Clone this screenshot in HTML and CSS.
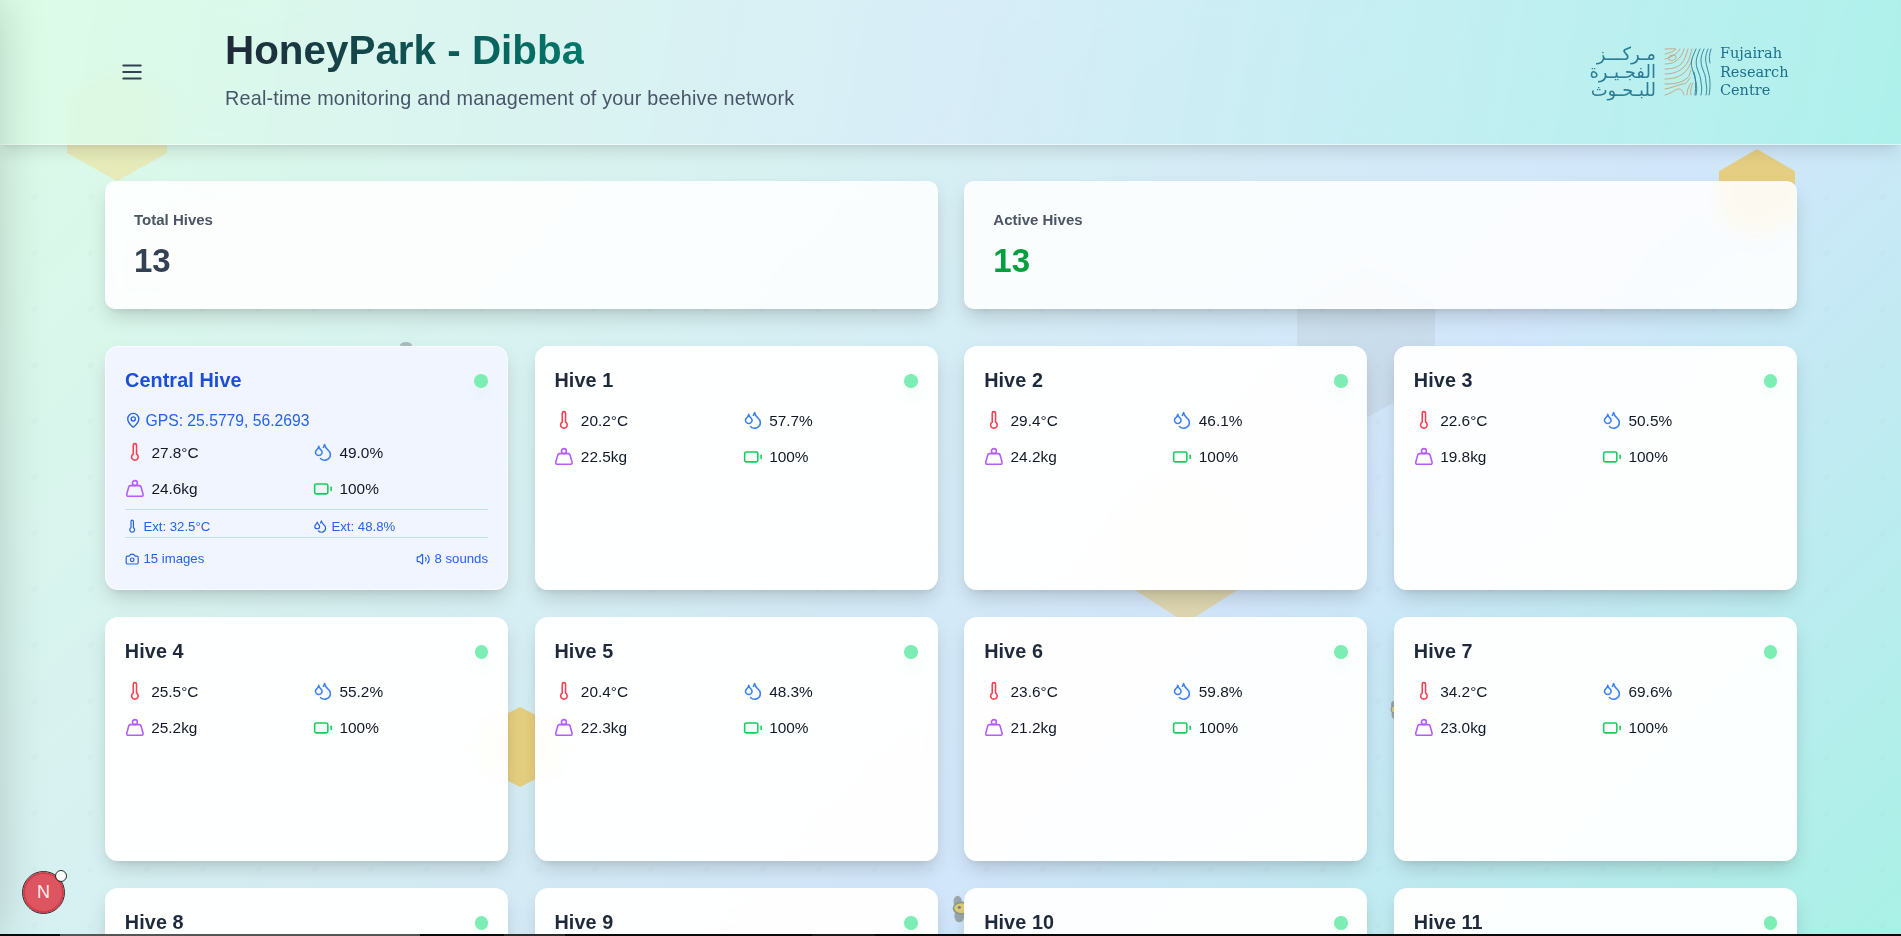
FILE: index.html
```html
<!DOCTYPE html>
<html lang="en">
<head>
<meta charset="utf-8">
<title>HoneyPark - Dibba</title>
<link rel="stylesheet" href="styles.css">
</head>
<body>
<svg class="sprites" width="0" height="0" aria-hidden="true">
  <symbol id="i-temp" viewBox="0 0 24 24"><path d="M14 4v10.54a4 4 0 1 1-4 0V4a2 2 0 0 1 4 0Z"/></symbol>
  <symbol id="i-drop" viewBox="0 0 24 24"><path d="M7 16.3c2.2 0 4-1.83 4-3.95 0-1.11-.59-2.2-1.76-3.13S7.4 6.77 7 5.28c-.44 1.49-1.11 2.96-2.24 3.94S3 11.24 3 12.35c0 2.12 1.8 3.95 4 3.95z"/><path d="M12.56 6.6A10.97 10.97 0 0 0 14 3.02c.5 2.5 2 4.9 4 6.5s3 3.5 3 5.5a6.98 6.98 0 0 1-11.91 4.97"/></symbol>
  <symbol id="i-weight" viewBox="0 0 24 24"><circle cx="12" cy="5" r="3"/><path d="M6.5 8a2 2 0 0 0-1.905 1.46L2.1 18.5A2 2 0 0 0 4 21h16a2 2 0 0 0 1.925-2.54L19.4 9.5A2 2 0 0 0 17.48 8Z"/></symbol>
  <symbol id="i-batt" viewBox="0 0 24 24"><path d="M22 14v-4"/><rect x="2" y="6" width="16" height="12" rx="2"/></symbol>
  <symbol id="i-pin" viewBox="0 0 24 24"><path d="M20 10c0 4.993-5.539 10.193-7.399 11.799a1 1 0 0 1-1.202 0C9.539 20.193 4 14.993 4 10a8 8 0 0 1 16 0"/><circle cx="12" cy="10" r="3"/></symbol>
  <symbol id="i-cam" viewBox="0 0 24 24"><path d="M14.5 4h-5L7 7H4a2 2 0 0 0-2 2v9a2 2 0 0 0 2 2h16a2 2 0 0 0 2-2V9a2 2 0 0 0-2-2h-3l-2.5-3z"/><circle cx="12" cy="13" r="3"/></symbol>
  <symbol id="i-vol" viewBox="0 0 24 24"><path d="M11 4.702a.705.705 0 0 0-1.203-.498L6.413 7.587A1.4 1.4 0 0 1 5.416 8H3a1 1 0 0 0-1 1v6a1 1 0 0 0 1 1h2.416a1.4 1.4 0 0 1 .997.413l3.383 3.384A.705.705 0 0 0 11 19.298z"/><path d="M16 9a5 5 0 0 1 0 6"/><path d="M19.364 18.364a9 9 0 0 0 0-12.728"/></symbol>
  <symbol id="i-bee" viewBox="0 0 24 36"><ellipse cx="8" cy="9" rx="5" ry="7" fill="#9aa9ae" stroke="none"/><ellipse cx="10" cy="26" rx="6" ry="8" fill="#9aa9ae" stroke="none"/><ellipse cx="13" cy="17" rx="10" ry="7" fill="#e2cf7a" stroke="#8f9a8e" stroke-width="2"/><circle cx="10" cy="16" r="2" fill="#7f8a78" stroke="none"/></symbol>
</svg>

<div class="app">
  <div class="decor" aria-hidden="true">
    <span class="hex hex-a"></span>
    <span class="hex hex-b"></span>
    <span class="hex hex-c"></span>
    <span class="hex hex-d"></span>
    <span class="hex hex-e"></span>
    <svg class="bee bee-a"><use href="#i-bee"/></svg>
    <svg class="bee bee-b"><use href="#i-bee"/></svg>
    <span class="bee-c"></span>
  </div>

  <header class="topbar">
    <button class="menu" aria-label="Menu">
      <svg viewBox="0 0 24 24"><path d="M4 6h16M4 12h16M4 18h16"/></svg>
    </button>
    <div class="brand">
      <h1>HoneyPark - Dibba</h1>
      <p>Real-time monitoring and management of your beehive network</p>
    </div>
    <div class="logo">
      <div class="logo-ar" dir="rtl" lang="ar"><span>مـركـــز</span><span>الفجـيـرة</span><span>للبـحـوث</span></div>
      <svg class="logo-mark" viewBox="0 0 48 48">
        <g class="tan">
          <path d="M1 1c4 0 8-.5 11 0-3 3-7 4-11 5"/>
          <path d="M16 1c-3 5-8 8-15 10"/>
          <path d="M20 1c-1 5-4 9-8 12-3 2-7 3-11 3"/>
          <path d="M24 1c-2 6-3 11-7 15-4 4-10 5-16 5"/>
          <path d="M28 1c-2 7-3 13-8 18-5 5-12 7-19 7"/>
          <path d="M6 8c3-2 6-1 6 1 0 3-4 4-7 3-1-1 0-3 1-4z"/>
          <path d="M1 31c8 0 15-2 20-7 3-3 6-8 7-13"/>
          <path d="M1 36c9 0 16-1 21-5 3-2 4-5 5-9"/>
          <path d="M1 41c7-1 12-4 18-5 3 0 5-3 7-6"/>
          <path d="M1 47c6-1 10-6 14-6 3 0 4 3 5 6"/>
          <path d="M23 47c0-4 1-8 4-12"/>
          <path d="M27 47c-1-4 0-8 2-12"/>
        </g>
        <g class="teal">
          <path d="M32 1c-3 7-6 12-4 19 2 6 3 10 4 14 1 5 1 9 0 13"/>
          <path d="M36 1c-3 7-5 12-3 19 2 6 4 9 4 15 1 4 1 8 0 12"/>
          <path d="M40 1c-3 7-4 11-2 18 2 6 4 9 4 16 1 4 1 8 0 12"/>
          <path d="M44 1c-3 7-3 11-1 18 1 5 3 9 3 16 0 4 0 8-1 12"/>
          <path d="M47 1c-2 6-2 10-1 14"/>
          <path d="M30 24c2 6 2 14 1 23"/>
        </g>
      </svg>
      <div class="logo-en">Fujairah<br>Research<br>Centre</div>
    </div>
  </header>

  <main class="content">
    <section class="stats">
      <div class="stat"><div class="stat-label">Total Hives</div><div class="stat-value">13</div></div>
      <div class="stat"><div class="stat-label">Active Hives</div><div class="stat-value is-active">13</div></div>
    </section>

    <section class="hives">
      <article class="hive hive-central">
        <div class="hive-head"><h2>Central Hive</h2><span class="dot"></span></div>
        <div class="gps"><svg class="ic-gps"><use href="#i-pin"/></svg>GPS: 25.5779, 56.2693</div>
        <div class="readings">
          <div class="reading"><svg class="ic c-temp"><use href="#i-temp"/></svg>27.8°C</div>
          <div class="reading"><svg class="ic c-drop"><use href="#i-drop"/></svg>49.0%</div>
          <div class="reading"><svg class="ic c-weight"><use href="#i-weight"/></svg>24.6kg</div>
          <div class="reading"><svg class="ic c-batt"><use href="#i-batt"/></svg>100%</div>
        </div>
        <div class="ext">
          <div class="ext-item"><svg class="ic-sm"><use href="#i-temp"/></svg>Ext: 32.5°C</div>
          <div class="ext-item"><svg class="ic-sm"><use href="#i-drop"/></svg>Ext: 48.8%</div>
        </div>
        <div class="media">
          <div class="ext-item"><svg class="ic-sm"><use href="#i-cam"/></svg>15 images</div>
          <div class="ext-item"><svg class="ic-sm"><use href="#i-vol"/></svg>8 sounds</div>
        </div>
      </article>

      <article class="hive">
        <div class="hive-head"><h2>Hive 1</h2><span class="dot"></span></div>
        <div class="readings">
          <div class="reading"><svg class="ic c-temp"><use href="#i-temp"/></svg>20.2°C</div>
          <div class="reading"><svg class="ic c-drop"><use href="#i-drop"/></svg>57.7%</div>
          <div class="reading"><svg class="ic c-weight"><use href="#i-weight"/></svg>22.5kg</div>
          <div class="reading"><svg class="ic c-batt"><use href="#i-batt"/></svg>100%</div>
        </div>
      </article>
      <article class="hive">
        <div class="hive-head"><h2>Hive 2</h2><span class="dot"></span></div>
        <div class="readings">
          <div class="reading"><svg class="ic c-temp"><use href="#i-temp"/></svg>29.4°C</div>
          <div class="reading"><svg class="ic c-drop"><use href="#i-drop"/></svg>46.1%</div>
          <div class="reading"><svg class="ic c-weight"><use href="#i-weight"/></svg>24.2kg</div>
          <div class="reading"><svg class="ic c-batt"><use href="#i-batt"/></svg>100%</div>
        </div>
      </article>
      <article class="hive">
        <div class="hive-head"><h2>Hive 3</h2><span class="dot"></span></div>
        <div class="readings">
          <div class="reading"><svg class="ic c-temp"><use href="#i-temp"/></svg>22.6°C</div>
          <div class="reading"><svg class="ic c-drop"><use href="#i-drop"/></svg>50.5%</div>
          <div class="reading"><svg class="ic c-weight"><use href="#i-weight"/></svg>19.8kg</div>
          <div class="reading"><svg class="ic c-batt"><use href="#i-batt"/></svg>100%</div>
        </div>
      </article>
      <article class="hive">
        <div class="hive-head"><h2>Hive 4</h2><span class="dot"></span></div>
        <div class="readings">
          <div class="reading"><svg class="ic c-temp"><use href="#i-temp"/></svg>25.5°C</div>
          <div class="reading"><svg class="ic c-drop"><use href="#i-drop"/></svg>55.2%</div>
          <div class="reading"><svg class="ic c-weight"><use href="#i-weight"/></svg>25.2kg</div>
          <div class="reading"><svg class="ic c-batt"><use href="#i-batt"/></svg>100%</div>
        </div>
      </article>
      <article class="hive">
        <div class="hive-head"><h2>Hive 5</h2><span class="dot"></span></div>
        <div class="readings">
          <div class="reading"><svg class="ic c-temp"><use href="#i-temp"/></svg>20.4°C</div>
          <div class="reading"><svg class="ic c-drop"><use href="#i-drop"/></svg>48.3%</div>
          <div class="reading"><svg class="ic c-weight"><use href="#i-weight"/></svg>22.3kg</div>
          <div class="reading"><svg class="ic c-batt"><use href="#i-batt"/></svg>100%</div>
        </div>
      </article>
      <article class="hive">
        <div class="hive-head"><h2>Hive 6</h2><span class="dot"></span></div>
        <div class="readings">
          <div class="reading"><svg class="ic c-temp"><use href="#i-temp"/></svg>23.6°C</div>
          <div class="reading"><svg class="ic c-drop"><use href="#i-drop"/></svg>59.8%</div>
          <div class="reading"><svg class="ic c-weight"><use href="#i-weight"/></svg>21.2kg</div>
          <div class="reading"><svg class="ic c-batt"><use href="#i-batt"/></svg>100%</div>
        </div>
      </article>
      <article class="hive">
        <div class="hive-head"><h2>Hive 7</h2><span class="dot"></span></div>
        <div class="readings">
          <div class="reading"><svg class="ic c-temp"><use href="#i-temp"/></svg>34.2°C</div>
          <div class="reading"><svg class="ic c-drop"><use href="#i-drop"/></svg>69.6%</div>
          <div class="reading"><svg class="ic c-weight"><use href="#i-weight"/></svg>23.0kg</div>
          <div class="reading"><svg class="ic c-batt"><use href="#i-batt"/></svg>100%</div>
        </div>
      </article>
      <article class="hive"><div class="hive-head"><h2>Hive 8</h2><span class="dot"></span></div></article>
      <article class="hive"><div class="hive-head"><h2>Hive 9</h2><span class="dot"></span></div></article>
      <article class="hive"><div class="hive-head"><h2>Hive 10</h2><span class="dot"></span></div></article>
      <article class="hive"><div class="hive-head"><h2>Hive 11</h2><span class="dot"></span></div></article>
    </section>
  </main>

  <div class="drawer" aria-hidden="true"></div>
  <div class="devbadge"><span>N</span><i></i></div>
  <div class="edge" aria-hidden="true"><b class="e1"></b><b class="e2"></b><b class="e3"></b><b class="e4"></b><b class="e5"></b><b class="e6"></b><b class="e7"></b></div>
</div>
</body>
</html>
```

FILE: styles.css
```css
* { box-sizing: border-box; }
html, body { margin: 0; height: 100%; overflow: hidden; }
body {
  font-family: "Liberation Sans", Arial, sans-serif;
  color: #111827;
  background: linear-gradient(135deg, #dcfce7 0%, #d2e6fb 65%, #a9f1e6 100%);
}
.sprites { position: absolute; }
.app { position: relative; height: 100vh; overflow: hidden; }
.app::before {
  content: "";
  position: absolute;
  inset: 0;
  background-image: radial-gradient(circle at 34.5px 29.5px, rgba(120, 150, 170, .06) 0, rgba(120, 150, 170, .04) 2px, rgba(120, 150, 170, 0) 4px);
  background-size: 56px 56px;
}

/* decorative layer */
.decor { position: absolute; inset: 0; }
.hex {
  position: absolute;
  clip-path: polygon(50% 0, 100% 25%, 100% 75%, 50% 100%, 0 75%, 0 25%);
}
.hex-a { left: 67px; top: 69px; width: 100px; height: 112px; background: #e9e6a8; opacity: .75; }
.hex-b { left: 1719px; top: 149px; width: 76px; height: 89px; background: #e5ce82; }
.hex-c { left: 1297px; top: 266px; width: 138px; height: 152px; background: rgba(130, 125, 115, .1); }
.hex-d { left: 1129px; top: 476px; width: 114px; height: 147px; background: #e3cf90; opacity: .7; }
.hex-e { left: 481px; top: 707px; width: 78px; height: 80px; background: #e5cf7f; }
.bee { position: absolute; fill: none; stroke: none; }
.bee-a { left: 951px; top: 894px; width: 20px; height: 30px; }
.bee-b { left: 1389px; top: 700px; width: 14px; height: 20px; }
.bee-c { position: absolute; left: 400px; top: 342px; width: 12px; height: 6px; border-radius: 50%; background: #a9bcc0; }

/* header */
.topbar {
  position: relative;
  height: 145px;
  display: flex;
  align-items: center;
  padding: 0 112.5px 0 119px;
  background: linear-gradient(100deg, rgba(220, 252, 231, .86) 0%, rgba(216, 236, 248, .88) 50%, rgba(172, 241, 234, .95) 100%);
  border-bottom: 1px solid rgba(255, 255, 255, .55);
  box-shadow: 0 10px 15px -3px rgba(0, 0, 0, .1), 0 4px 6px -4px rgba(0, 0, 0, .1);
  backdrop-filter: blur(8px);
}
.menu {
  width: 26px;
  height: 26px;
  padding: 0;
  border: 0;
  background: none;
  flex: none;
}
.menu svg { display: block; width: 26px; height: 26px; fill: none; stroke: #334155; stroke-width: 2; stroke-linecap: round; }
.brand { margin-left: 80px; flex: 1; margin-top: -9px; }
.brand h1 {
  margin: 0 0 10px;
  font-size: 40.4px;
  line-height: 50px;
  font-weight: 700;
  display: inline-block;
  background: linear-gradient(90deg, #1f2937 0%, #00796b 100%);
  -webkit-background-clip: text;
  background-clip: text;
  color: transparent;
}
.brand p { margin: 0; font-size: 19.8px; line-height: 26px; color: #475569; letter-spacing: .2px; }

.logo { display: flex; align-items: center; gap: 8px; height: 56px; }
.logo-ar {
  display: flex;
  flex-direction: column;
  width: 68px;
  font-family: "DejaVu Sans", sans-serif;
  font-size: 18px;
  line-height: 18px;
  color: #2a7d96;
  white-space: nowrap;
}
.logo-mark { width: 48px; height: 48px; fill: none; stroke-width: .9; stroke-linecap: round; }
.logo-mark .tan { stroke: #c3a27f; }
.logo-mark .teal { stroke: #2a7d96; }
.logo-en { font-family: "DejaVu Serif", serif; font-size: 14.5px; line-height: 18.5px; color: #1d6f8e; }

/* content */
.content { position: relative; padding: 35.8px 104px 0 105px; }
.stats { display: grid; grid-template-columns: 1fr 1fr; gap: 26.7px; margin-bottom: 37.2px; }
.stat {
  height: 128px;
  padding: 29px 29px;
  border-radius: 10px;
  background: rgba(255, 255, 255, .88);
  backdrop-filter: blur(10px);
  box-shadow: 0 10px 20px -3px rgba(0, 0, 0, .16), 0 4px 8px -4px rgba(0, 0, 0, .1);
}
.stat-label { font-size: 15px; line-height: 20px; font-weight: 700; color: #4b5563; }
.stat-value { margin-top: 10px; font-size: 33px; line-height: 42px; font-weight: 700; color: #334155; }
.stat-value.is-active { color: #00a03c; }

.hives { display: grid; grid-template-columns: repeat(4, 1fr); grid-auto-rows: 244.4px; column-gap: 26.7px; row-gap: 26.6px; }
.hive {
  padding: 19.8px;
  border-radius: 13.2px;
  background: rgba(255, 255, 255, .96);
  backdrop-filter: blur(10px);
  box-shadow: 0 10px 20px -3px rgba(0, 0, 0, .16), 0 4px 8px -4px rgba(0, 0, 0, .1);
}
.hive-central {
  background: #f1f5ff;
  border: 1px solid rgba(255, 255, 255, .7);
  padding: 18.8px 19px;
  color: #2563eb;
}
.hive-head { display: flex; justify-content: space-between; align-items: center; height: 28px; margin-bottom: 15px; }
.hive h2 { margin: 0; font-size: 19.8px; line-height: 28px; font-weight: 700; color: #1e293b; letter-spacing: .1px; }
.hive-central h2 { color: #1d4ed8; }
.dot { width: 13.5px; height: 13.5px; margin-top: 2px; border-radius: 50%; background: #7ceeb4; box-shadow: 0 8px 14px rgba(134, 239, 172, .12); }
.gps { display: flex; align-items: center; gap: 4px; font-size: 15.7px; line-height: 23px; margin: 0 0 9px; color: #2563eb; }
.readings { display: grid; grid-template-columns: 1fr 1fr; column-gap: 13.2px; row-gap: 13.2px; }
.reading { display: flex; align-items: center; gap: 6.6px; font-size: 15.4px; line-height: 23.1px; color: #111827; }
.ic { flex: none; width: 19.8px; height: 19.8px; fill: none; stroke: currentColor; stroke-width: 1.9; stroke-linecap: round; stroke-linejoin: round; }
.ic-gps { flex: none; width: 16.5px; height: 16.5px; fill: none; stroke: currentColor; stroke-width: 2; stroke-linecap: round; stroke-linejoin: round; }
.ic-sm { flex: none; width: 14.4px; height: 14.4px; fill: none; stroke: currentColor; stroke-width: 2; stroke-linecap: round; stroke-linejoin: round; }
.c-temp { color: #fb3f50; }
.c-drop { color: #3b82f6; }
.c-weight { color: #b35cff; }
.c-batt { color: #12cf5a; }
.ext {
  display: grid;
  grid-template-columns: 1fr 1fr;
  column-gap: 13.2px;
  margin-top: 8.5px;
  height: 29px;
  padding-top: 7px;
  align-items: center;
  border-top: 1px solid #bfdbfe;
  border-bottom: 1px solid #bfdbfe;
}
.ext-item { display: flex; align-items: center; gap: 4px; font-size: 13.2px; line-height: 18px; color: #2563eb; }
.media { display: flex; justify-content: space-between; margin-top: 12.5px; }

/* off-canvas drawer shadow */
.drawer {
  position: absolute;
  left: -320px;
  top: 0;
  bottom: 0;
  width: 320px;
  box-shadow: 0 0 45px rgba(0, 0, 0, .18);
}

/* dev indicator */
.devbadge {
  position: absolute;
  left: 23px;
  top: 872px;
  width: 41px;
  height: 41px;
  border-radius: 50%;
  background: #dd5560;
  border: 2px solid #d63b47;
  outline: 1px solid #2b2b2b;
  display: flex;
  align-items: center;
  justify-content: center;
  color: rgba(255, 255, 255, .9);
  font-size: 18px;
}
.devbadge i {
  position: absolute;
  right: -4px;
  top: -3px;
  width: 10px;
  height: 10px;
  border-radius: 50%;
  background: #fff;
  outline: 1px solid #2b2b2b;
}

/* screen edge strip */
.edge { position: absolute; left: 0; right: 0; bottom: 0; height: 2px; display: flex; background: #0a0a0a; }
.edge b { display: block; height: 2px; }
.e1 { width: 60px; background: #0a0a0a; }
.e2 { width: 360px; background: #555; }
.e3 { width: 84px; background: #0a0a0a; }
.e4 { width: 61px; background: #2c2c2c; }
.e5 { width: 247px; background: #0a0a0a; }
.e6 { width: 63px; background: #1c1c1c; }
.e7 { flex: 1; background: #0a0a0a; }
```
